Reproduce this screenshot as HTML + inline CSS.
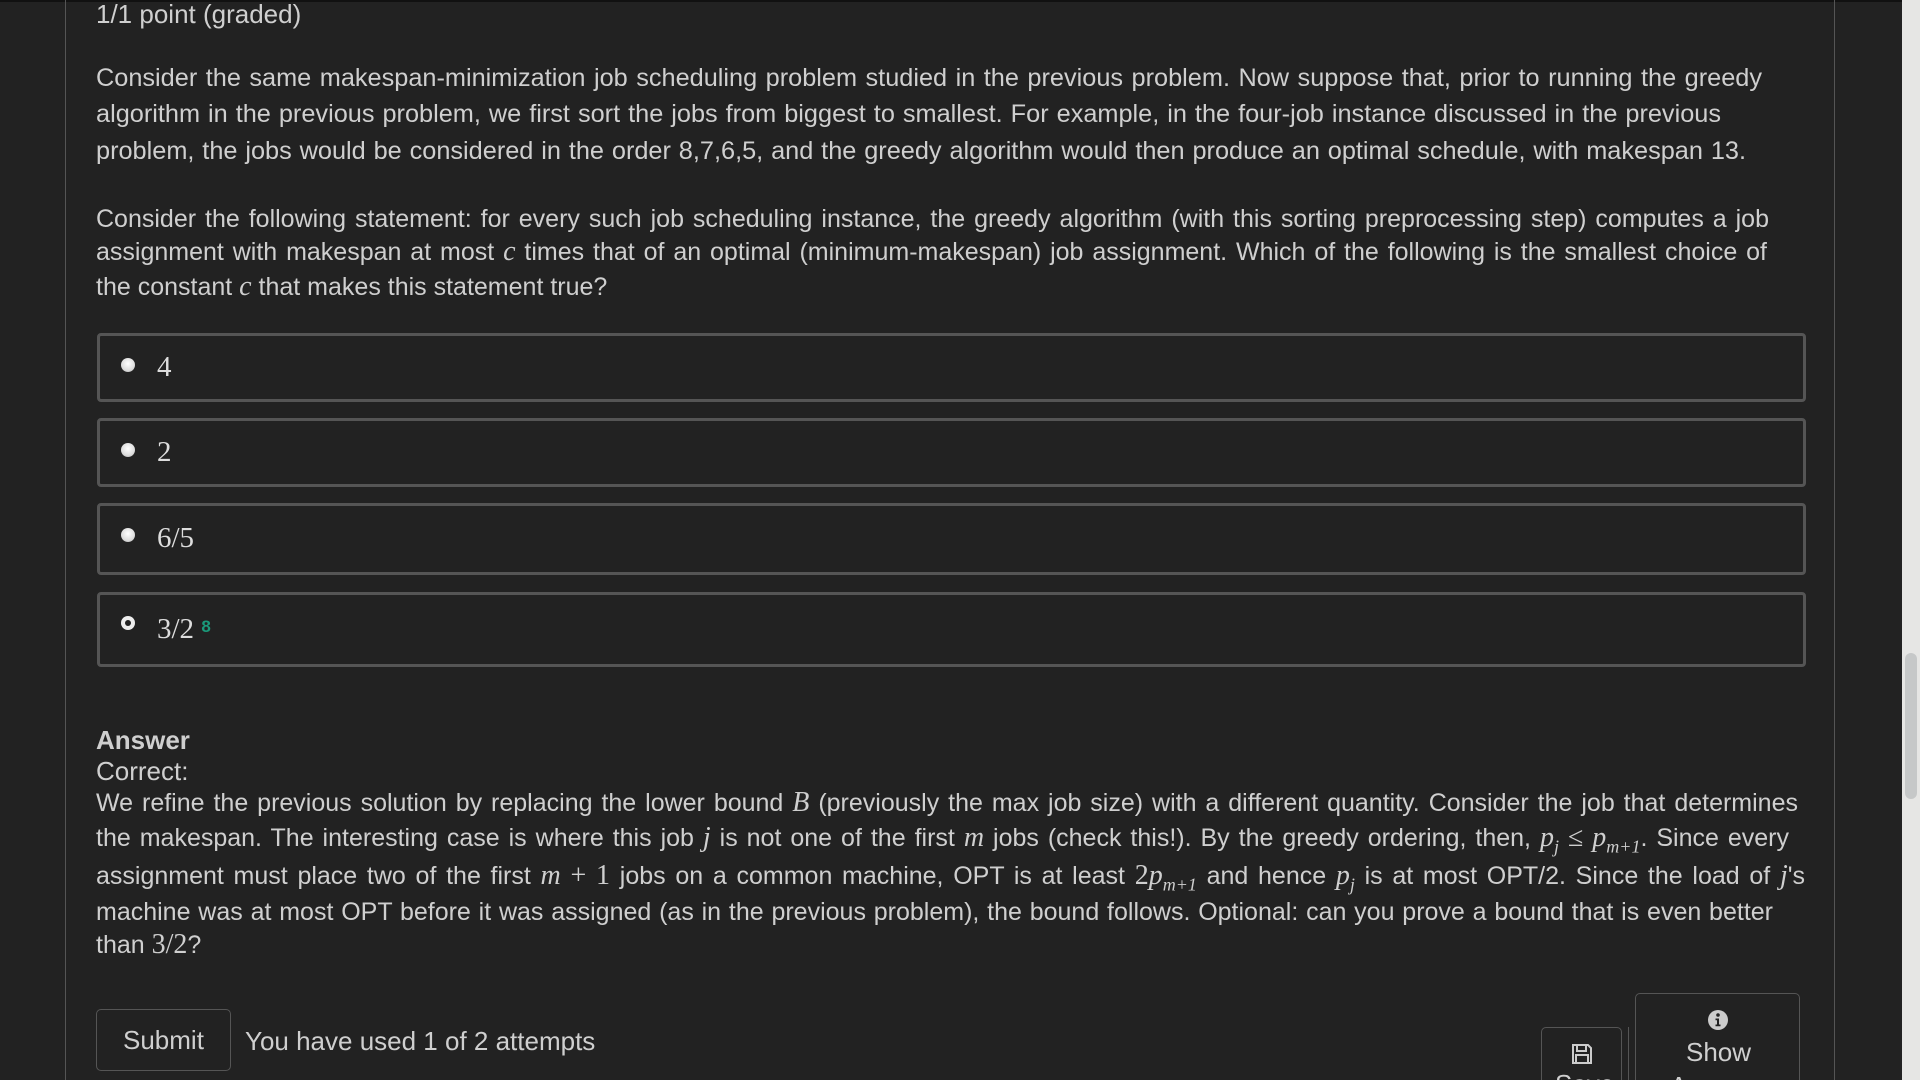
<!DOCTYPE html>
<html><head><meta charset="utf-8"><style>
html,body{margin:0;padding:0;width:1920px;height:1080px;overflow:hidden;background:#222;}
body{position:relative;font-family:"Liberation Sans",sans-serif;color:#cfcfcf;}
.top{position:absolute;left:0;top:0;width:1902px;height:2px;background:#111;}
.panel{position:absolute;left:65px;top:0;width:1770px;height:1080px;border-left:1px solid #555;border-right:1px solid #555;box-sizing:border-box;}
.sb{position:absolute;left:1902px;top:0;width:18px;height:1080px;background:#e6e6e4;}
.thumb{position:absolute;left:1905px;top:653px;width:12px;height:146px;background:#c6c8c8;border-radius:6px;}
.ln{position:absolute;left:96px;white-space:nowrap;font-size:26px;line-height:36px;height:36px;text-align:justify;text-align-last:justify;}
.nj{text-align:left;text-align-last:left;}
.cn{font-size:25px;}
.p1{font-size:25.3px;}
.m{font-family:"Liberation Serif",serif;font-style:italic;font-size:28px;}
.mr{font-family:"Liberation Serif",serif;font-size:28px;}
sub{font-size:18px;}
.box{position:absolute;left:97px;width:1709px;border:3px solid #555;border-radius:4px;box-sizing:border-box;}
.radio{position:absolute;left:121px;width:14px;height:14px;border-radius:50%;background:radial-gradient(circle at 50% 40%,#fff,#ddd 60%,#aaa);}
.opt{position:absolute;left:157px;font-family:"Liberation Serif",serif;font-size:29px;color:#ddd;line-height:36px;}
.btn{position:absolute;border:1px solid #555;border-radius:5px;box-sizing:border-box;}
</style></head><body>
<div class="top"></div>
<div class="panel"></div>
<div class="sb"></div><div class="thumb"></div>

<div class="ln nj" style="top:-4px;">1/1 point (graded)</div>

<div class="ln p1" style="top:60px;width:1666px;">Consider the same makespan-minimization job scheduling problem studied in the previous problem. Now suppose that, prior to running the greedy</div>
<div class="ln p1" style="top:96px;width:1625px;">algorithm in the previous problem, we first sort the jobs from biggest to smallest. For example, in the four-job instance discussed in the previous</div>
<div class="ln p1" style="top:133px;width:1650px;">problem, the jobs would be considered in the order 8,7,6,5, and the greedy algorithm would then produce an optimal schedule, with makespan 13.</div>

<div class="ln cn" style="top:201px;width:1673px;">Consider the following statement: for every such job scheduling instance, the greedy algorithm (with this sorting preprocessing step) computes a job</div>
<div class="ln cn" style="top:234px;width:1671px;">assignment with makespan at most <span class="m">c</span> times that of an optimal (minimum-makespan) job assignment. Which of the following is the smallest choice of</div>
<div class="ln cn nj" style="top:269px;">the constant <span class="m">c</span> that makes this statement true?</div>

<div class="box" style="top:333px;height:69px;"></div>
<div class="radio" style="top:358px;"></div><div class="opt" style="top:349px;">4</div>
<div class="box" style="top:418px;height:69px;"></div>
<div class="radio" style="top:443px;"></div><div class="opt" style="top:434px;">2</div>
<div class="box" style="top:503px;height:72px;"></div>
<div class="radio" style="top:528px;"></div><div class="opt" style="top:520px;">6/5</div>
<div class="box" style="top:592px;height:75px;"></div>
<div class="radio" style="top:616px;background:#eee;"><div style="position:absolute;left:4px;top:4px;width:6px;height:6px;border-radius:50%;background:#222;"></div></div>
<div class="opt" style="top:611px;">3/2 <span style="font-family:'Liberation Sans',sans-serif;font-weight:bold;font-size:17px;color:#1a9a7a;position:relative;top:-6px;">8</span></div>

<div class="ln nj" style="top:722px;font-weight:bold;">Answer</div>
<div class="ln nj" style="top:753px;">Correct:</div>
<div class="ln cn" style="top:785px;width:1702px;">We refine the previous solution by replacing the lower bound <span class="m">B</span> (previously the max job size) with a different quantity. Consider the job that determines</div>
<div class="ln cn" style="top:820px;width:1693px;">the makespan. The interesting case is where this job <span class="m">j</span> is not one of the first <span class="m">m</span> jobs (check this!). By the greedy ordering, then, <span class="m">p<sub>j</sub></span> <span class="mr">≤</span> <span class="m">p<sub>m+1</sub></span>. Since every</div>
<div class="ln cn" style="top:858px;width:1709px;">assignment must place two of the first <span class="m">m</span> <span class="mr">+ 1</span> jobs on a common machine, OPT is at least <span class="mr">2</span><span class="m">p<sub>m+1</sub></span> and hence <span class="m">p<sub>j</sub></span> is at most OPT/2. Since the load of <span class="m">j</span>'s</div>
<div class="ln cn" style="top:894px;width:1677px;">machine was at most OPT before it was assigned (as in the previous problem), the bound follows. Optional: can you prove a bound that is even better</div>
<div class="ln cn nj" style="top:927px;">than <span class="mr">3/2</span>?</div>

<div class="btn" style="left:96px;top:1009px;width:135px;height:62px;"></div>
<div class="ln nj" style="left:123px;top:1022px;">Submit</div>
<div class="ln nj" style="left:245px;top:1023px;">You have used 1 of 2 attempts</div>

<div class="btn" style="left:1541px;top:1027px;width:81px;height:70px;"></div>
<div style="position:absolute;left:1628px;top:1027px;width:1px;height:60px;background:#555;"></div>
<svg style="position:absolute;left:1571px;top:1043px;" width="22" height="22" viewBox="0 0 22 22"><path d="M2 2h15l3 3v15H2z" fill="none" stroke="#ccc" stroke-width="2"/><rect x="6" y="2" width="9" height="6" fill="none" stroke="#ccc" stroke-width="2"/><rect x="5" y="12" width="12" height="8" fill="none" stroke="#ccc" stroke-width="2"/></svg>
<div class="ln nj" style="left:1555px;top:1066px;">Save</div>
<div class="btn" style="left:1635px;top:993px;width:165px;height:100px;"></div>
<svg style="position:absolute;left:1707px;top:1009px;" width="22" height="22" viewBox="0 0 22 22"><circle cx="11" cy="11" r="10" fill="#ccc"/><circle cx="11" cy="6" r="1.8" fill="#222"/><path d="M8.5 9.5h3.5v6h1.5v1.8h-5v-1.8h1.5v-4.2h-1.5z" fill="#222"/></svg>
<div class="ln nj" style="left:1686px;top:1034px;">Show</div>
<div class="ln nj" style="left:1670px;top:1068px;">Answer</div>
</body></html>
